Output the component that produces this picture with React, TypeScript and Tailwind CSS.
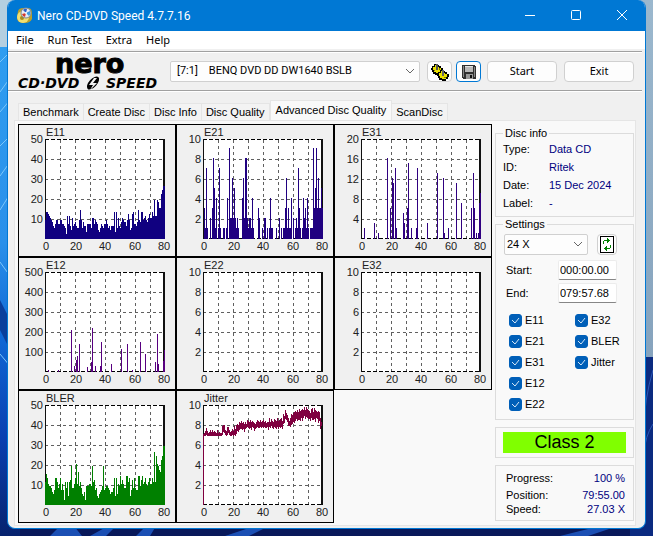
import React from 'react';

type Bar = [number, number];

interface ChartData {
  title: string;
  max: number;
  color: string;
  bars?: Bar[];
  band?: Bar[];
}

const PLOT_LEFT = 27;
const PLOT_TOP = 15;
const PLOT_BOTTOM = 114;

// one value per pixel column
const e11 = [
  9, 13, 13, 12, 11, 10, 9, 8, 6, 5, 7, 9, 9, 7, 7, 9, 9, 7, 7, 6,
  5, 2, 11, 7, 11, 6, 4, 10, 6, 7, 8, 6, 5, 5, 9, 14, 9, 5, 8, 6,
  6, 3, 7, 7, 7, 7, 5, 10, 10, 7, 9, 8, 7, 4, 3, 5, 7, 6, 5, 7,
  7, 9, 7, 5, 6, 4, 6, 6, 6, 13, 3, 13, 5, 10, 6, 5, 8, 10, 9, 8,
  8, 6, 9, 12, 9, 4, 5, 12, 13, 7, 7, 6, 8, 14, 9, 8, 13, 13, 9, 10,
  11, 9, 8, 10, 12, 10, 10, 13, 11, 19, 11, 11, 19, 18, 15, 15, 22, 24, 26, 26,
];

const bler = [
  11, 15, 13, 10, 9, 9, 8, 6, 5, 7, 13, 13, 11, 8, 10, 13, 7, 10, 7, 2,
  11, 8, 11, 4, 11, 12, 19, 8, 8, 10, 13, 20, 10, 16, 9, 11, 8, 5, 4, 6,
  2, 9, 9, 9, 10, 10, 9, 19, 11, 12, 7, 8, 4, 3, 5, 6, 7, 9, 19, 7,
  8, 9, 9, 8, 7, 5, 6, 6, 8, 13, 4, 13, 5, 10, 9, 14, 10, 12, 10, 8,
  8, 14, 14, 11, 13, 4, 7, 12, 8, 13, 8, 7, 7, 14, 14, 9, 12, 14, 10, 11,
  13, 10, 9, 11, 13, 10, 10, 13, 11, 26, 11, 24, 20, 19, 17, 16, 22, 24, 29, 29,
];

const e21: Bar[] = [
  [1, 3], [2, 1], [3, 7], [4, 1], [7, 2], [9, 3], [10, 8], [11, 5], [12, 1], [13, 4],
  [15, 1], [16, 7], [17, 1], [20, 1], [21, 1], [23, 1], [24, 4], [26, 9], [27, 2], [28, 2],
  [29, 6], [30, 2], [31, 5], [32, 2], [33, 1], [34, 2], [35, 1], [39, 4], [40, 6], [41, 2],
  [42, 8], [43, 8], [44, 2], [45, 1], [46, 2], [47, 2], [48, 1], [49, 4], [50, 1], [55, 3],
  [56, 2], [59, 1], [61, 2], [62, 2], [64, 1], [66, 1], [67, 4], [68, 1], [69, 1], [73, 1],
  [76, 2], [78, 1], [80, 1], [81, 1], [82, 3], [83, 6], [84, 1], [85, 3], [86, 1], [87, 1],
  [88, 4], [90, 2], [92, 1], [93, 2], [94, 1], [95, 7], [96, 3], [97, 1], [99, 1], [100, 4],
  [101, 2], [102, 3], [103, 1], [104, 4], [105, 1], [107, 1], [108, 1], [109, 1], [110, 9], [111, 3],
  [112, 5], [113, 9], [114, 3], [115, 6], [116, 3], [117, 3], [118, 5], [119, 3],
];

const e31: Bar[] = [
  [3, 2], [13, 3], [17, 1], [26, 16], [29, 6], [31, 12], [32, 11], [34, 14], [35, 2], [42, 5],
  [43, 3], [46, 6], [47, 15], [50, 2], [55, 2], [56, 14], [66, 3], [76, 13], [82, 12], [83, 1],
  [87, 2], [95, 11], [100, 7], [110, 6], [112, 13], [113, 6], [115, 1], [117, 1], [118, 7], [119, 9],
];

const e12: Bar[] = [
  [3, 5], [13, 5], [26, 205], [29, 25], [31, 55], [32, 75], [34, 135], [42, 20], [46, 45], [47, 215],
  [50, 25], [55, 25], [56, 145], [66, 35], [76, 110], [82, 135], [87, 5], [95, 145], [100, 85],
  [110, 45], [112, 185], [113, 35], [118, 50], [119, 105],
];

// low / high of the jitter signal, in tenths
const jitter: Bar[] = [
  [0, 70], [69, 71], [69, 73], [70, 76], [69, 73], [69, 71], [69, 72], [69, 74], [69, 72], [69, 74],
  [69, 72], [69, 73], [69, 72], [69, 71], [69, 74], [69, 71], [69, 72], [69, 71], [69, 71], [70, 78],
  [73, 79], [72, 79], [70, 74], [69, 73], [70, 77], [72, 77], [70, 74], [69, 72], [69, 73], [70, 75],
  [69, 73], [70, 78], [69, 75], [71, 79], [74, 80], [73, 79], [75, 82], [76, 81], [76, 83], [75, 81],
  [76, 82], [73, 80], [76, 82], [77, 80], [78, 84], [77, 83], [76, 82], [77, 84], [75, 82], [78, 83],
  [77, 82], [74, 81], [76, 80], [77, 82], [78, 84], [77, 83], [77, 82], [78, 84], [77, 82], [78, 83],
  [77, 84], [78, 82], [77, 83], [77, 81], [78, 82], [75, 82], [78, 86], [77, 82], [79, 85], [77, 83],
  [76, 82], [78, 85], [77, 84], [76, 83], [78, 86], [76, 83], [78, 84], [77, 85], [78, 86], [76, 83],
  [81, 90], [82, 88], [86, 94], [85, 91], [83, 89], [79, 86], [79, 83], [78, 86], [80, 90], [81, 89],
  [83, 91], [82, 92], [84, 93], [86, 92], [84, 94], [85, 92], [85, 95], [84, 93], [87, 94], [84, 95],
  [87, 94], [89, 97], [86, 94], [88, 97], [87, 95], [86, 94], [86, 93], [84, 91], [87, 95], [85, 96],
  [85, 92], [86, 96], [83, 94], [87, 93], [86, 92], [82, 93], [84, 92], [76, 86], [79, 82],
];

const perColumn = (values: number[]): Bar[] => values.map((v, i) => [i, v] as Bar);

const charts: ChartData[] = [
  { title: 'E11', max: 50, color: '#100080', bars: perColumn(e11) },
  { title: 'E21', max: 10, color: '#200080', bars: e21 },
  { title: 'E31', max: 20, color: '#300080', bars: e31 },
  { title: 'E12', max: 500, color: '#580080', bars: e12 },
  { title: 'E22', max: 10, color: '#600080' },
  { title: 'E32', max: 10, color: '#700080' },
  { title: 'BLER', max: 50, color: '#008000', bars: perColumn(bler) },
  { title: 'Jitter', max: 10, color: '#800040', band: jitter },
];

const Chart: React.FC<{ chart: ChartData }> = ({ chart }) => {
  const { title, max, color, bars = [], band = [] } = chart;
  const y = (value: number) => PLOT_BOTTOM - Math.round((value / max) * 100);
  const barPath = bars
    .map(([x, v]) => `M${PLOT_LEFT + x} ${PLOT_BOTTOM + 1}V${y(v)}h1V${PLOT_BOTTOM + 1}z`)
    .join('');
  const bandPath = band
    .map(([lo, hi], x) => `M${PLOT_LEFT + x} ${y(lo / 10) + 1}V${y(hi / 10)}h1V${y(lo / 10) + 1}z`)
    .join('');

  return (
    <div className="border border-black bg-[#f0f0f0]">
      <svg width="156" height="131" viewBox="1 1 156 131" className="block font-[Liberation_Sans,sans-serif] text-[11px]">
        <g shapeRendering="crispEdges">
          <rect x={PLOT_LEFT} y={PLOT_TOP} width="119" height="100" fill="#fff" />
          <g stroke="#606060" strokeDasharray="3 3">
            {[35, 55, 75, 95].map((gy) => (
              <path key={gy} d={`M27 ${gy + 0.5}H145`} />
            ))}
            {[42, 57, 72, 87, 102, 117, 132].map((gx) => (
              <path key={gx} d={`M${gx + 0.5} 16V114`} />
            ))}
          </g>
          <path d="M27 15.500H146M27 114.500H146" stroke="#000" strokeDasharray="4 2" />
          <path d="M27 15h1v100h-1zM145 15h2v100h-2z" fill="#101010" />
          <path d={barPath + bandPath} fill={color} />
        </g>
        <g fill="#202020">
          <text x="28" y="12">{title}</text>
          {[5, 4, 3, 2, 1].map((n) => (
            <text key={n} x="25" y={119 - n * 20} textAnchor="end">{(max / 5) * n}</text>
          ))}
          {[0, 20, 40, 60, 80].map((n) => (
            <text key={n} x={28 + Math.round(n * 1.48)} y="126" textAnchor="middle">{n}</text>
          ))}
        </g>
      </svg>
    </div>
  );
};

const Wallpaper = () => (
  <svg className="absolute inset-0 w-full h-full" viewBox="0 0 653 536" preserveAspectRatio="none" aria-hidden="true">
    <defs>
      <linearGradient id="left" x1="0" y1="0" x2="0" y2="1">
        <stop offset="0" stopColor="#2f9df0" />
        <stop offset="0.4" stopColor="#2a90ea" />
        <stop offset="0.6" stopColor="#0f66d4" />
        <stop offset="0.8" stopColor="#0a3fb0" />
        <stop offset="1" stopColor="#06226e" />
      </linearGradient>
      <linearGradient id="right" x1="0" y1="0" x2="0" y2="1">
        <stop offset="0" stopColor="#9bb8ce" />
        <stop offset="1" stopColor="#86a3bd" />
      </linearGradient>
    </defs>
    <rect width="653" height="536" fill="#08185a" />
    <rect width="20" height="48" fill="#b4cfe0" />
    <rect y="47" width="20" height="489" fill="url(#left)" />
    <path d="M0 62l10-10M0 92l10-14M0 112l10-12M0 146l10-10M0 176l10-14M0 210l10-16M0 262l10 14M0 354l10 12" stroke="#7cc6fa" />
    <path d="M0 300l10 20v30L0 330z" fill="#0a3f9c" />
    <rect x="630" width="23" height="357" fill="url(#right)" />
    <rect x="630" y="357" width="23" height="179" fill="#0b2a80" />
    <path d="M653 370q-9 30-9 60M653 424q-8 12-9 30" stroke="#2c58b8" fill="none" />
    <path d="M50 536l10-10h14l8 10zM90 536l18-10h8l-10 10zM136 536l10-10h10l-6 10zM225 536l30-10h14l-20 10zM560 536l40-10h18l-30 10z" fill="#1b4fb4" />
  </svg>
);

const AppIcon = () => (
  <svg width="17" height="17" viewBox="0 0 17 17" aria-hidden="true">
    <path d="M2 4q1-3 5-3h6q3 1 3 5v6q-2 4-7 4H6q-5-1-5-5z" fill="#b9a02c" />
    <ellipse cx="7" cy="10" rx="6" ry="6" fill="#f1df72" />
    <circle cx="6" cy="11" r="2" fill="#a48d20" />
    <circle cx="10" cy="6" r="5" fill="#e8edf2" stroke="#7c8893" />
    <path d="M10 6l-3-3q2-2 4-1z" fill="#2d62c8" />
    <path d="M10 6l4-2q1 3-1 5z" fill="#3c9be0" />
    <path d="M10 6l-4 1q1 3 3 3z" fill="#d33a2e" />
    <circle cx="10" cy="6" r="1" fill="#fff" />
  </svg>
);

const Logo = () => (
  <svg width="162" height="37" viewBox="8 53 162 37" role="img" aria-label="Nero CD-DVD Speed" className="shrink-0 overflow-visible">
    <text x="55" y="73" stroke="#000" className="font-[DejaVu_Sans,sans-serif] text-[27px] leading-none font-bold">nero</text>
    <g className="font-[DejaVu_Sans,sans-serif] text-[14px] leading-none font-bold italic">
      <text x="18" y="88">CD·DVD</text>
      <text x="106" y="88">SPEED</text>
    </g>
    <ellipse cx="93" cy="83" rx="8" ry="4" transform="rotate(-48 93 83)" fill="#000" />
    <path d="M94 78l-5 7h4l-3 5 7-7h-4l4-5z" fill="#f0f0f0" />
  </svg>
);

const GearsIcon = () => (
  <svg width="18" height="18" viewBox="0 0 18 18" shapeRendering="crispEdges" aria-hidden="true">
    <path d="M1 3h2V1h2v1h3v1h2v2h2v3h-1v2H9v2H4v-1H2V9H1V7H0V5h1z" fill="#000" />
    <path d="M2 4h2V2h1v2h3v1h2v3H9v2H5V9H3V7H2z" fill="#e8e000" />
    <path d="M5 1h2v6H5z" fill="#555" />
    <path d="M7 9h2V7h2v1h3v1h2v2h2v3h-1v2h-2v2h-4v-1H8v-2H7v-2H6v-2h1z" fill="#000" />
    <path d="M8 10h2V8h1v2h3v1h2v3h-1v2h-4v-1H9v-2H8z" fill="#e8e000" />
    <path d="M11 7h2v6h-2z" fill="#666" />
    <path d="M3 7h1v1H3zM13 14h2v1h-2zM8 5h1v2H8z" fill="#807800" />
  </svg>
);

const SaveIcon = () => (
  <svg width="14" height="14" viewBox="0 0 14 14" shapeRendering="crispEdges" aria-hidden="true">
    <path d="M0 0h13v1h1v13H1v-1H0z" fill="#303030" />
    <path d="M1 1h1v11H1zM12 2h1v10h-1z" fill="#888" />
    <path d="M3 1h8v6H3z" fill="#b8b8b8" />
    <path d="M3 1h8v1H3z" fill="#e4e4e4" />
    <path d="M4 9h7v5H4z" fill="#999" />
    <path d="M8 10h2v3H8z" fill="#111" />
  </svg>
);

const RefreshIcon = () => (
  <svg width="14" height="17" viewBox="0 0 14 17" shapeRendering="crispEdges" aria-hidden="true">
    <path d="M0 0h14v17H0z" fill="#000" />
    <path d="M1 1h12v15H1z" fill="#fff" />
    <path d="M3 5h1v3H3zM4 4h3V2h1v1h1v1h1v1H9v1H8v1H7V5H4z" fill="#008000" />
    <path d="M10 9h1v3h-1zM10 12v1H7v2H6v-1H5v-1H4v-1h1v-1h1v-1h1v2z" fill="#008000" />
  </svg>
);

const Chevron = () => (
  <svg width="9" height="5" viewBox="0 0 9 5" className="absolute right-1 mr-px top-2 pointer-events-none" aria-hidden="true">
    <path d="M0 0l4 4 4-4" fill="none" stroke="#666" />
  </svg>
);

const CheckItem: React.FC<{ label: string }> = ({ label }) => (
  <label className="flex items-center gap-[3px] h-[21px]">
    <span className="relative flex">
      <input type="checkbox" defaultChecked className="appearance-none size-[13px] rounded-[3px] border border-[#858585] checked:border-[#005fb8] checked:bg-[#005fb8]" />
      <svg width="13" height="13" viewBox="0 0 13 13" className="absolute inset-0 pointer-events-none" aria-hidden="true">
        <path d="M3 6l3 3 4-5" fill="none" stroke="#d4e6f6" />
      </svg>
    </span>
    {label}
  </label>
);

const tabs = ['Benchmark', 'Create Disc', 'Disc Info', 'Disc Quality', 'Advanced Disc Quality', 'ScanDisc'];

const discInfo = [
  ['Type:', 'Data CD'],
  ['ID:', 'Ritek'],
  ['Date:', '15 Dec 2024'],
  ['Label:', '-'],
];

const buttonStyle = 'flex items-center justify-center h-[21px] bg-[#fdfdfd] border border-[#d0d0d0] rounded';
const groupStyle = 'border border-[#dcdcdc]';

const App: React.FC = () => (
  <div className="relative min-h-screen px-[7px] pb-[7px] font-[Liberation_Sans,sans-serif] text-[11px] text-black">
    <Wallpaper />

    <div className="relative bg-[#f0f0f0] border border-t-0 border-[#0078d4] rounded-lg overflow-hidden">
      {/* Title bar */}
      <header className="flex items-center h-[31px] pl-2 bg-[#0078d4] text-white">
        <AppIcon />
        <h1 className="ml-1 flex-1 font-[Roboto,sans-serif] text-[12px]">Nero CD-DVD Speed 4.7.7.16</h1>
        <button aria-label="Minimize" className="flex justify-center w-[46px]">
          <svg width="11" height="11" viewBox="0 0 11 11"><path d="M0 5h10v1H0z" fill="#fff" /></svg>
        </button>
        <button aria-label="Maximize" className="flex justify-center w-[46px]">
          <svg width="11" height="11" viewBox="0 0 11 11"><rect x="0.5" y="0.5" width="9" height="9" rx="1" fill="none" stroke="#fff" /></svg>
        </button>
        <button aria-label="Close" className="flex justify-center w-[46px]">
          <svg width="11" height="11" viewBox="0 0 11 11"><path d="M0 0l10 10M10 0L0 10" stroke="#fff" /></svg>
        </button>
      </header>

      <nav className="flex items-center gap-[14px] h-[18px] pl-2 bg-white font-[Noto_Sans,sans-serif]">
        {['File', 'Run Test', 'Extra', 'Help'].map((item) => (
          <button key={item} className="leading-[18px]">{item}</button>
        ))}
      </nav>

      {/* Toolbar */}
      <div className="mt-[2px] mr-[3px] border-t border-[#a0a0a0]">
        <div className="flex items-center pr-2 border-t border-b border-t-white border-b-[#a0a0a0] h-[39px]">
          <Logo />
          <div className="relative flex-1 h-[21px]">
            <select aria-label="Drive" className="appearance-none w-full h-[21px] pl-[6px] bg-[#fdfdfd] border border-[#d0d0d0] rounded-xs font-[Roboto,sans-serif]">
              <option>{'[7:1]\u00a0\u00a0\u00a0\u00a0BENQ DVD DD DW1640 BSLB'}</option>
            </select>
            <Chevron />
          </div>
          <button aria-label="Options" className={`${buttonStyle} w-[25px] ml-[7px]`}><GearsIcon /></button>
          <button aria-label="Save" className="flex items-center justify-center w-[25px] h-[21px] ml-1 bg-[#fdfdfd] border border-[#0078d4] rounded"><SaveIcon /></button>
          <button className={`${buttonStyle} w-[70px] ml-[6px] font-[Noto_Sans,sans-serif]`}>Start</button>
          <button className={`${buttonStyle} w-[70px] ml-[7px] font-[Noto_Sans,sans-serif]`}>Exit</button>
        </div>
        <div className="h-px bg-white" />
      </div>

      {/* Tabs */}
      <div role="tablist" className="flex items-end h-[20px] mt-2 ml-[10px]">
        {tabs.map((tab) =>
          tab === 'Advanced Disc Quality' ? (
            <button key={tab} role="tab" aria-selected="true" className="h-[20px] px-[5px] bg-[#f9f9f9] border border-b-0 border-[#e5e5e5]">{tab}</button>
          ) : (
            <button key={tab} role="tab" aria-selected="false" className="h-[17px] px-1 bg-[#f3f3f3] border border-b-0 border-l-0 first:border-l border-[#e5e5e5]">{tab}</button>
          )
        )}
      </div>

      <main className="flex gap-[3px] ml-[6px] mr-[9px] mb-[2px] pt-[3px] pb-[2px] pl-[3px] pr-px bg-[#f9f9f9] border border-[#e5e5e5]">
        <section className="grid shrink-0 grid-cols-[repeat(3,max-content)] content-start">
          {charts.map((chart) => (
            <Chart key={chart.title} chart={chart} />
          ))}
        </section>

        <aside className="flex-1 min-w-0 flex flex-col pt-[2px]">
          <fieldset className={`${groupStyle} h-[91px] px-[7px]`}>
            <legend className="px-[2px] leading-[14px]">Disc info</legend>
            <dl className="grid grid-cols-[46px_1fr] leading-[18px]">
              {discInfo.map(([name, value]) => (
                <React.Fragment key={name}>
                  <dt>{name}</dt>
                  <dd className="text-[#000080]">{value}</dd>
                </React.Fragment>
              ))}
            </dl>
          </fieldset>

          <fieldset className={`${groupStyle} min-w-0 h-[203px] pl-2 pr-4`}>
            <legend className="-ml-px px-[2px] leading-[14px]">Settings</legend>
            <div className="flex justify-between pt-[3px]">
              <div className="relative w-[84px] h-[21px]">
                <select aria-label="Speed" className="appearance-none w-full h-[21px] pl-[2px] bg-[#fdfdfd] border border-[#d0d0d0] rounded-xs">
                  <option>24 X</option>
                </select>
                <Chevron />
              </div>
              <button aria-label="Refresh" className={`${buttonStyle} w-[20px]`}><RefreshIcon /></button>
            </div>
            <div className="flex items-center justify-between mt-[5px] pl-[2px]">
              <label htmlFor="start">Start:</label>
              <input id="start" defaultValue="000:00.00" className="w-[59px] h-[20px] pl-px bg-white border border-[#ececec] border-b-[#868686] rounded-xs" />
            </div>
            <div className="flex items-center justify-between mt-[3px] pl-[2px]">
              <label htmlFor="end">End:</label>
              <input id="end" defaultValue="079:57.68" className="w-[59px] h-[20px] pl-px bg-white border border-[#ececec] border-b-[#868686] rounded-xs" />
            </div>
            <div className="flex mt-[7px] pl-[5px] -mr-3">
              <div className="w-[66px] shrink-0">
                {['E11', 'E21', 'E31', 'E12', 'E22'].map((label) => <CheckItem key={label} label={label} />)}
              </div>
              <div>
                {['E32', 'BLER', 'Jitter'].map((label) => <CheckItem key={label} label={label} />)}
              </div>
            </div>
          </fieldset>

          <div className={`${groupStyle} mt-[7px] px-[7px] py-1`}>
            <p className="bg-[#80ff00] text-center text-[18px] leading-[21px]">Class 2</p>
          </div>

          <dl className={`${groupStyle} mt-[7px] h-[56px] pt-[5px] pl-[10px] pr-2 leading-[14px]`}>
            <div className="flex justify-between mb-[3px]">
              <dt>Progress:</dt>
              <dd className="text-[#000080]">100 %</dd>
            </div>
            <div className="flex justify-between">
              <dt>Position:</dt>
              <dd className="text-[#000080]">79:55.00</dd>
            </div>
            <div className="flex justify-between">
              <dt>Speed:</dt>
              <dd className="text-[#000080]">27.03 X</dd>
            </div>
          </dl>
        </aside>
      </main>
    </div>
  </div>
);

export default App;
